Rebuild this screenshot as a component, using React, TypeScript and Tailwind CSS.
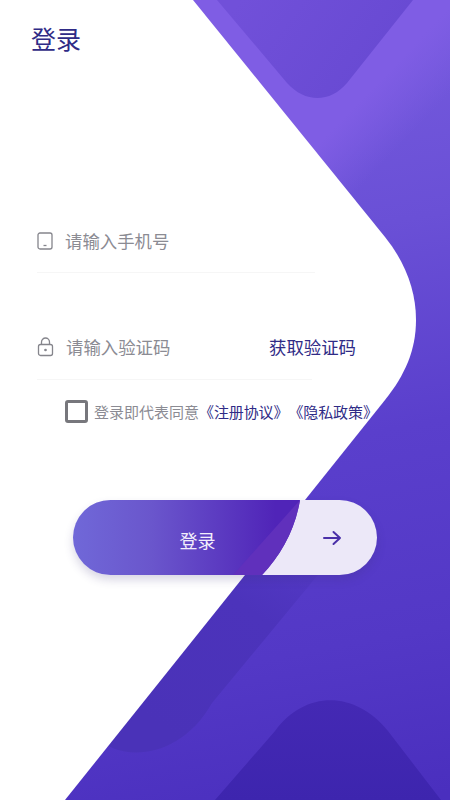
export default function App() {
  return (
    <div className="relative w-[450px] h-[800px] overflow-hidden bg-white font-['Noto_Sans_CJK_SC','Noto_Sans',sans-serif]">
      <svg className="absolute inset-0" width="450" height="800" viewBox="0 0 450 800">
        <defs>
          <linearGradient id="bg" x1="250" y1="0" x2="400" y2="800" gradientUnits="userSpaceOnUse">
            <stop offset="0" stopColor="#775cdf" />
            <stop offset="0.3" stopColor="#6a50d6" />
            <stop offset="0.55" stopColor="#5a3fcc" />
            <stop offset="0.8" stopColor="#5338c6" />
            <stop offset="1" stopColor="#4a2fbe" />
          </linearGradient>
          <linearGradient id="band" x1="385" y1="75" x2="428" y2="116" gradientUnits="userSpaceOnUse">
            <stop offset="0" stopColor="#7f5de4" />
            <stop offset="1" stopColor="#7f5de4" stopOpacity="0" />
          </linearGradient>
          <linearGradient id="top" x1="240" y1="0" x2="380" y2="100" gradientUnits="userSpaceOnUse">
            <stop offset="0" stopColor="#7150d9" />
            <stop offset="1" stopColor="#6749d2" />
          </linearGradient>
          <linearGradient id="strip" x1="320" y1="540" x2="180" y2="740" gradientUnits="userSpaceOnUse">
            <stop offset="0" stopColor="#4c33bb" stopOpacity="0" />
            <stop offset="0.4" stopColor="#4c33bb" />
            <stop offset="1" stopColor="#4a32b8" />
          </linearGradient>
          <linearGradient id="peak" x1="330" y1="700" x2="330" y2="800" gradientUnits="userSpaceOnUse">
            <stop offset="0" stopColor="#4429b4" />
            <stop offset="1" stopColor="#3d25ae" />
          </linearGradient>
        </defs>
        <rect width="450" height="800" fill="url(#bg)" />
        <path d="M193 0 H450 V200 H300 Z" fill="url(#band)" />
        <path d="M217 0 L287 83 C305 103 330 103 347 83 L413 0 Z" fill="url(#top)" />
        <path d="M350 440 L450 380 L450 415 L212 703 C180 760 120 762 98 738 Z" fill="url(#strip)" />
        <path d="M215 800 L275 731 C305 690 355 690 388 731 L441 800 Z" fill="url(#peak)" />
        <path d="M0 0 L193 0 L385 237 C405 262 416 290 416 320 C416 350 405 375 385 400 L65 800 L0 800 Z" fill="#ffffff" />
      </svg>

      <div className="relative flex flex-col">
        <h1 className="pl-[31px] pt-[21px] text-[25px] leading-[35px] font-normal text-[#2f2b86]">登录</h1>

        <div className="mt-[168px] ml-[37px] w-[278px] h-[49px] pt-[7px] flex items-start gap-[12px] border-b border-[#f6f6f6]">
          <svg className="mt-[1px]" width="16" height="18" viewBox="0 0 16 18" fill="none" stroke="#85858c" strokeWidth="1.3">
            <rect x="1" y="1" width="14" height="16" rx="2" />
            <path d="M6.5 13.5h3" />
          </svg>
          <span className="text-[17.4px] leading-[18px] mt-[1px] text-[#8b8b93]">请输入手机号</span>
        </div>

        <div className="mt-[57px] ml-[37px] w-[275px] h-[50px] pt-[7px] flex items-start border-b border-[#f6f6f6] relative">
          <svg width="17" height="20" viewBox="0 0 17 20" fill="none" stroke="#85858c" strokeWidth="1.3">
            <rect x="1.5" y="7.5" width="14" height="11" rx="2" />
            <path d="M4.5 7.5V5a4 4 0 0 1 8 0v2.5" />
            <circle cx="8.5" cy="13" r="0.7" fill="#85858c" />
          </svg>
          <span className="ml-[12px] text-[17.4px] leading-[18px] mt-[1px] text-[#8b8b93]">请输入验证码</span>
          <span className="absolute left-[232px] top-[8px] w-[90px] text-[17.4px] leading-[18px] text-[#2f2b86] whitespace-nowrap">获取验证码</span>
        </div>

        <div className="mt-[20px] ml-[65px] flex items-center">
          <div className="w-[23px] h-[23px] border-[3px] border-[#77777c] rounded-[3px]" />
          <span className="ml-[6px] text-[15px] leading-[23px] text-[#8b8b93] whitespace-nowrap">登录即代表同意</span>
          <span className="text-[15px] leading-[23px] text-[#2f2b86] whitespace-nowrap -tracking-[0.1px] [text-spacing-trim:space-all]">《注册协议》《隐私政策》</span>
        </div>

        <button className="relative mt-[77px] ml-[73px] w-[304px] h-[75px] rounded-full overflow-hidden bg-[#ece8f8] shadow-[0_5px_10px_rgba(60,50,120,0.2)] flex items-center">
          <svg className="absolute inset-0" width="304" height="75" viewBox="0 0 304 75">
            <defs>
              <linearGradient id="btn" x1="0" y1="0" x2="225" y2="0" gradientUnits="userSpaceOnUse">
                <stop offset="0" stopColor="#7068d8" />
                <stop offset="0.35" stopColor="#6a56cc" />
                <stop offset="0.9" stopColor="#5024b8" />
              </linearGradient>
            </defs>
            <path d="M0 0 H227 C222 30 208 55 189 75 H0 Z" fill="url(#btn)" />
            <path d="M227 0 C222 30 208 55 189 75 H160 Z" fill="#6030bc" />
          </svg>
          <span className="relative w-[249px] text-center text-[18px] leading-[28px] mt-[4px] text-[#f3eefc]">登录</span>
          <svg className="relative mt-[1px]" width="20" height="18" viewBox="0 0 20 18" fill="none" stroke="#4a30a8" strokeWidth="2" strokeLinecap="round" strokeLinejoin="round">
            <path d="M2 9h16M11.5 3l6.5 6-6.5 6" />
          </svg>
        </button>
      </div>
    </div>
  );
}
